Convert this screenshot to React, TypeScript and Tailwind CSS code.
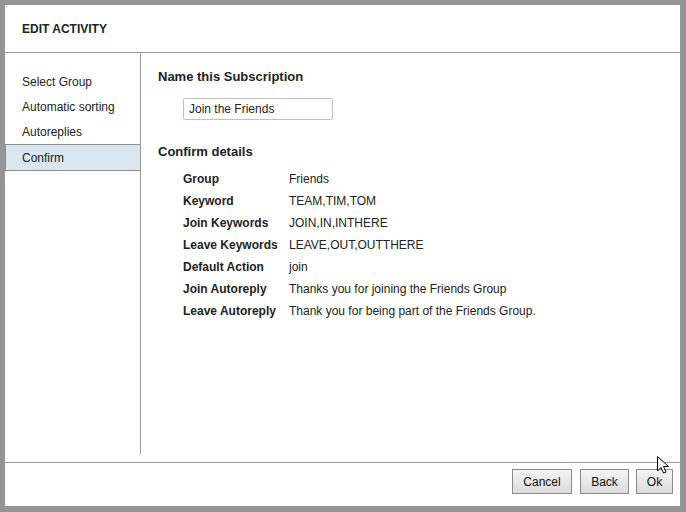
import React from "react";

const steps = ["Select Group", "Automatic sorting", "Autoreplies", "Confirm"];

const details: [string, string][] = [
    ["Group", "Friends"],
    ["Keyword", "TEAM,TIM,TOM"],
    ["Join Keywords", "JOIN,IN,INTHERE"],
    ["Leave Keywords", "LEAVE,OUT,OUTTHERE"],
    ["Default Action", "join"],
    ["Join Autoreply", "Thanks you for joining the Friends Group"],
    ["Leave Autoreply", "Thank you for being part of the Friends Group."],
];

function Button({ label, width }: { label: string; width: string }) {
    return (
        <button
            type="button"
            className={`${width} h-[25px] border border-[#8a8a8a] bg-gradient-to-b from-[#f4f4f4] to-[#dcdcdc] text-[12px] text-[#111]`}>
            {label}
        </button>
    );
}

export default function App() {
    return (
        <div
            className="relative w-[686px] h-[512px] bg-[#959595] pt-[5px] pl-[5px] pr-[6px] pb-[6px] text-[#222]"
            style={{ fontFamily: '"Liberation Sans", Arial, sans-serif' }}>
            <div className="flex flex-col h-full bg-white">
                {/* Header */}
                <div className="h-[48px] shrink-0 flex items-center pl-[17px] pt-[1px] border-b border-[#9a9a9a]">
                    <h1 className="text-[12px] font-bold leading-none">EDIT ACTIVITY</h1>
                </div>

                {/* Body */}
                <div className="flex flex-1 pb-[8px]">
                    <div className="w-[136px] shrink-0 border-r border-[#9a9a9a] pt-[16px]">
                        {steps.map((step) =>
                            step === "Confirm" ? (
                                <div
                                    key={step}
                                    className="h-[27px] flex items-center pl-[16px] bg-[#d9e8f0] border-y border-l border-[#8f8f8f] text-[12px]">
                                    {step}
                                </div>
                            ) : (
                                <div key={step} className="h-[25px] flex items-center pl-[17px] text-[12px]">
                                    {step}
                                </div>
                            )
                        )}
                    </div>

                    <div className="flex-1 pl-[17px] pt-[16px]">
                        <h2 className="text-[13px] font-bold leading-[16px]">Name this Subscription</h2>
                        <input
                            type="text"
                            defaultValue="Join the Friends"
                            className="block ml-[25px] mt-[13px] w-[150px] h-[22px] px-[5px] border border-[#c0c0c0] rounded-[2px] text-[12px] text-[#222] outline-none"
                        />

                        <h2 className="mt-[24px] text-[13px] font-bold leading-[16px]">Confirm details</h2>
                        <div className="ml-[25px] mt-[8px]">
                            {details.map(([label, value]) => (
                                <div key={label} className="flex h-[22px] items-center text-[12px]">
                                    <span className="w-[106px] shrink-0 font-bold">{label}</span>
                                    <span>{value}</span>
                                </div>
                            ))}
                        </div>
                    </div>
                </div>

                {/* Footer */}
                <div className="h-[44px] shrink-0 border-t border-[#9a9a9a] flex justify-end items-start pt-[6px] pr-[7px] gap-[7px]">
                    <Button label="Cancel" width="w-[60px] mr-[1px]" />
                    <Button label="Back" width="w-[49px]" />
                    <Button label="Ok" width="w-[37px]" />
                </div>
            </div>

            {/* mouse pointer */}
            <svg className="absolute left-[656px] top-[455px]" width="16" height="20" viewBox="0 0 16 20">
                <path
                    d="M1.5 1.5 L1.5 16 L5 12.5 L7.5 18 L10 17 L7.5 11.5 L12.5 11.5 Z"
                    fill="#fff"
                    stroke="#000"
                    strokeWidth="1"
                    strokeLinejoin="round"
                />
            </svg>
        </div>
    );
}
